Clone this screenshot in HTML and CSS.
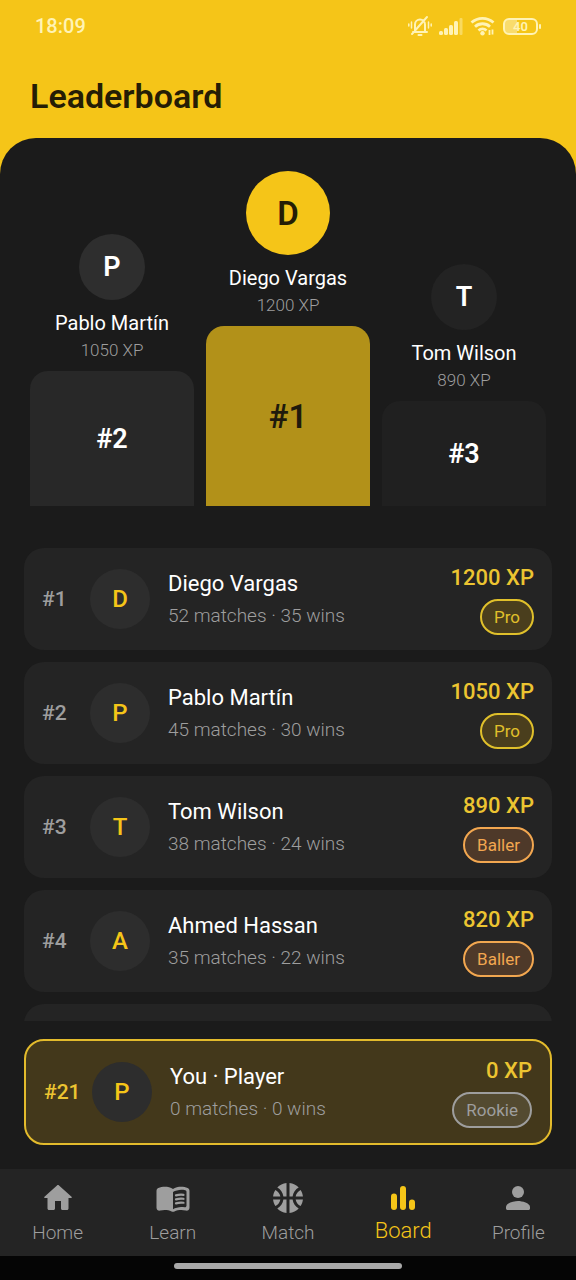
FILE: index.html
```html
<!DOCTYPE html>
<html lang="en">
<head>
<meta charset="utf-8">
<meta name="viewport" content="width=device-width, initial-scale=1">
<title>Leaderboard</title>
<link rel="stylesheet" href="styles.css">
</head>
<body>
<div class="app">
  <div class="status">
    <time class="status-time">18:09</time>
    <div class="status-icons">
      <svg width="24" height="22" viewBox="0 0 24 22" fill="none" stroke="currentColor" stroke-width="2" stroke-linecap="round" aria-label="Silent" role="img">
        <path d="M5 17h14M7 16V9.500a5 5 0 0 1 10 0V16M10.500 20h3M4 19 19 2"/>
        <path d="M3.500 7v6M.8 9v2M20.500 7v6M23.200 9v2" stroke-width="1.500"/>
      </svg>
      <svg width="24" height="18" viewBox="0 0 24 18" fill="currentColor" aria-label="Signal" role="img">
        <rect y="14" width="4" height="4" rx="1.500"/><rect x="5" y="11" width="4" height="7" rx="1.500"/><rect x="10" y="8" width="4" height="10" rx="1.500"/><rect x="15" y="4" width="4" height="14" rx="1.500"/><rect x="20.500" y="1" width="3" height="17" rx="1" opacity=".45"/>
      </svg>
      <svg width="26" height="20" viewBox="0 0 26 20" fill="none" stroke="currentColor" stroke-width="2.800" aria-label="Wi-Fi" role="img">
        <path d="M1.500 6.500a16.500 16.500 0 0 1 22 0M5 10.700a11 11 0 0 1 15 0M8.500 14.500a6 6 0 0 1 8 0"/>
        <circle cx="12.500" cy="17.200" r="2.200" fill="currentColor" stroke="none"/>
        <path d="M19.500 14v5M22.500 13.500v5" stroke-width="1.800"/>
      </svg>
      <span class="battery"><span class="battery-level">40</span></span>
    </div>
  </div>
  <header class="header"><h1 class="title">Leaderboard</h1></header>

  <main class="panel">
    <section class="podium" aria-label="Top three">
      <div class="place">
        <div class="medal medal-second">P</div>
        <div class="place-name">Pablo Martín</div>
        <div class="place-xp">1050 XP</div>
        <div class="block block-second">#2</div>
      </div>
      <div class="place">
        <div class="medal medal-first">D</div>
        <div class="place-name">Diego Vargas</div>
        <div class="place-xp">1200 XP</div>
        <div class="block block-first">#1</div>
      </div>
      <div class="place">
        <div class="medal medal-third">T</div>
        <div class="place-name">Tom Wilson</div>
        <div class="place-xp">890 XP</div>
        <div class="block block-third">#3</div>
      </div>
    </section>

    <ol class="ranking">
      <li class="row">
        <span class="rank">#1</span><span class="avatar">D</span>
        <div class="who"><div class="name">Diego Vargas</div><div class="record">52 matches · 35 wins</div></div>
        <div class="score"><div class="xp">1200 XP</div><span class="badge badge-pro">Pro</span></div>
      </li>
      <li class="row">
        <span class="rank">#2</span><span class="avatar">P</span>
        <div class="who"><div class="name">Pablo Martín</div><div class="record">45 matches · 30 wins</div></div>
        <div class="score"><div class="xp">1050 XP</div><span class="badge badge-pro">Pro</span></div>
      </li>
      <li class="row">
        <span class="rank">#3</span><span class="avatar">T</span>
        <div class="who"><div class="name">Tom Wilson</div><div class="record">38 matches · 24 wins</div></div>
        <div class="score"><div class="xp">890 XP</div><span class="badge badge-baller">Baller</span></div>
      </li>
      <li class="row">
        <span class="rank">#4</span><span class="avatar">A</span>
        <div class="who"><div class="name">Ahmed Hassan</div><div class="record">35 matches · 22 wins</div></div>
        <div class="score"><div class="xp">820 XP</div><span class="badge badge-baller">Baller</span></div>
      </li>
      <li class="row row-next" aria-hidden="true"></li>
    </ol>

    <section class="row row-me" aria-label="Your position">
      <span class="rank">#21</span><span class="avatar">P</span>
      <div class="who"><div class="name">You · Player</div><div class="record">0 matches · 0 wins</div></div>
      <div class="score"><div class="xp">0 XP</div><span class="badge badge-rookie">Rookie</span></div>
    </section>
  </main>

  <nav class="nav" aria-label="Main">
    <a class="tab" href="#home">
      <svg class="tab-icon" viewBox="0 0 24 24" aria-hidden="true"><path d="M10 19v-5h4v5c0 .55.45 1 1 1h3c.55 0 1-.45 1-1v-7h1.700c.46 0 .68-.57.33-.87L12.670 3.600c-.38-.34-.96-.34-1.340 0l-8.360 7.530c-.34.3-.13.87.33.87H5v7c0 .55.45 1 1 1h3c.55 0 1-.45 1-1z"/></svg>
      <span class="tab-label">Home</span>
    </a>
    <a class="tab" href="#learn">
      <svg class="tab-icon" viewBox="0 0 24 24" aria-hidden="true">
        <path fill-rule="evenodd" d="M17.500 4.500c-1.950 0-4.050.4-5.500 1.500-1.450-1.100-3.550-1.500-5.500-1.500-1.450 0-2.990.22-4.280.79C1.490 5.620 1 6.330 1 7.140v11.280c0 1.300 1.220 2.260 2.480 1.940.98-.25 2.020-.36 3.020-.36 1.560 0 3.220.26 4.560.92.6.3 1.280.3 1.870 0 1.340-.67 3-.92 4.560-.92 1 0 2.040.11 3.020.36 1.260.33 2.480-.63 2.480-1.940V7.140c0-.81-.49-1.520-1.220-1.850-1.280-.57-2.820-.79-4.270-.79zM21 17.230c0 .63-.58 1.090-1.200.98-.75-.14-1.530-.2-2.300-.2-1.700 0-4.150.65-5.500 1.500V8c1.350-.85 3.800-1.500 5.500-1.500.92 0 1.830.09 2.700.28.46.1.8.51.8.98v9.470z"/>
        <path d="M14 10.250q2.400-.75 5-.4M14 12.900q2.400-.75 5-.4M14 15.560q2.400-.75 5-.4" fill="none" stroke="currentColor" stroke-width="1.500" stroke-linecap="round"/>
      </svg>
      <span class="tab-label">Learn</span>
    </a>
    <a class="tab" href="#match">
      <svg class="tab-icon" viewBox="0 0 24 24" aria-hidden="true"><path d="M17.090 11h4.860c-.16-1.610-.71-3.110-1.540-4.400-1.730.83-2.990 2.450-3.320 4.400zM6.910 11c-.33-1.950-1.590-3.570-3.320-4.400-.83 1.290-1.380 2.790-1.540 4.400h4.860zM15.070 11c.32-2.590 1.880-4.790 4.060-6-1.600-1.630-3.740-2.710-6.130-2.950V11h2.070zM11 11V2.050C8.610 2.290 6.460 3.370 4.870 5c2.180 1.210 3.740 3.410 4.060 6H11zM8.930 13c-.32 2.590-1.880 4.790-4.060 6 1.600 1.630 3.740 2.710 6.130 2.950V13H8.930zM15.070 13H13v8.950c2.390-.24 4.540-1.320 6.130-2.950-2.180-1.210-3.740-3.410-4.060-6zM3.590 17.400c1.720-.83 2.990-2.460 3.320-4.400H2.050c.16 1.610.71 3.110 1.540 4.400zM17.090 13c.33 1.950 1.590 3.570 3.320 4.400.83-1.290 1.380-2.790 1.540-4.400h-4.860z"/></svg>
      <span class="tab-label">Match</span>
    </a>
    <a class="tab tab-active" href="#board" aria-current="page">
      <svg class="tab-icon" viewBox="0 0 24 24" aria-hidden="true"><rect x="4" y="9" width="4" height="11" rx="2"/><rect x="10" y="4" width="4" height="16" rx="2"/><rect x="16" y="13" width="4" height="7" rx="2"/></svg>
      <span class="tab-label">Board</span>
    </a>
    <a class="tab" href="#profile">
      <svg class="tab-icon" viewBox="0 0 24 24" aria-hidden="true"><circle cx="12" cy="8" r="4"/><path d="M12 14c-2.670 0-8 1.340-8 4v1c0 .55.45 1 1 1h14c.55 0 1-.45 1-1v-1c0-2.660-5.330-4-8-4z"/></svg>
      <span class="tab-label">Profile</span>
    </a>
  </nav>
  <div class="gesture"><div class="gesture-pill"></div></div>
</div>
</body>
</html>
```

FILE: styles.css
```css
:root {
  --yellow: #f5c518;
  --ink: #1b1b1b;
  --card: #242424;
  --circle: #2d2d2d;
  --grey: #9e9e9e;
}

* { box-sizing: border-box; }

body {
  margin: 0;
  background: var(--yellow);
  color: #fff;
  font-family: Roboto, "Liberation Sans", sans-serif;
}

.app {
  display: flex;
  flex-direction: column;
  height: 100vh;
}

.status {
  display: flex;
  justify-content: space-between;
  align-items: center;
  height: 54px;
  padding: 0 38px 2px 35px;
  color: #fff3b5;
}
.status-time { font-size: 20px; font-weight: 500; }
.status-icons { display: flex; align-items: center; gap: 7px; }
.battery {
  position: relative;
  width: 35px;
  height: 17px;
  border: 2px solid currentColor;
  border-radius: 6px;
  background: linear-gradient(to right, #f9dc6c 40%, transparent 40%);
  font-size: 13px;
  font-weight: 600;
  line-height: 13px;
  text-align: center;
}
.battery-level { display: block; }
.battery::after {
  content: "";
  position: absolute;
  top: 4px;
  right: -5px;
  width: 2px;
  height: 5px;
  border-radius: 1px;
  background: currentColor;
}

.header { height: 84px; padding: 22px 30px; }
.title {
  margin: 0;
  color: #251d05;
  font-size: 34px;
  font-weight: 600;
  line-height: 40px;
}

.panel {
  display: flex;
  flex: 1;
  flex-direction: column;
  min-height: 0;
  padding: 33px 24px 24px;
  border-radius: 36px 36px 0 0;
  background: var(--ink);
}

.podium {
  display: grid;
  grid-template-columns: repeat(3, 1fr);
  gap: 12px;
  align-items: end;
  padding: 0 6px;
}
.place { display: flex; flex-direction: column; align-items: center; }
.medal {
  display: grid;
  place-items: center;
  width: 66px;
  height: 66px;
  border-radius: 50%;
  font-size: 27px;
  font-weight: 600;
}
.medal-first {
  width: 84px;
  height: 84px;
  background: var(--yellow);
  color: #251d05;
  font-size: 33px;
}
.medal-second { background: #2e2e2e; }
.medal-third { background: #232323; }
.place-name { margin-top: 9px; font-size: 20px; line-height: 28px; }
.place-xp {
  margin-bottom: 7px;
  color: var(--grey);
  font-size: 17px;
  font-weight: 300;
  line-height: 27px;
}
.block {
  display: grid;
  place-items: center;
  width: 100%;
  border-radius: 18px 18px 0 0;
  font-size: 27px;
  font-weight: 600;
}
.block-first {
  height: 180px;
  background: #b29119;
  color: #1f1a0c;
  font-size: 33px;
}
.block-second { height: 135px; background: #282828; }
.block-third { height: 105px; background: #202020; }

.ranking {
  display: flex;
  flex: 1;
  flex-direction: column;
  gap: 12px;
  min-height: 0;
  margin: 42px 0 0;
  padding: 0;
  overflow: hidden;
  list-style: none;
}
.row {
  display: flex;
  flex-shrink: 0;
  align-items: center;
  padding: 15px 18px;
  border-radius: 20px;
  background: var(--card);
}
.row-next { min-height: 102px; }
.rank {
  width: 48px;
  color: var(--grey);
  font-size: 21px;
  font-weight: 500;
}
.avatar {
  display: grid;
  place-items: center;
  width: 60px;
  height: 60px;
  border-radius: 50%;
  background: var(--circle);
  color: var(--yellow);
  font-size: 24px;
  font-weight: 500;
}
.who { flex: 1; padding: 2px 0 0 18px; line-height: 32px; }
.name { font-size: 22px; }
.record { color: var(--grey); font-size: 19px; font-weight: 300; }
.score {
  display: flex;
  flex-direction: column;
  align-items: flex-end;
  gap: 8px;
  padding-top: 2px;
}
.xp {
  color: #ecc431;
  font-size: 22px;
  font-weight: 500;
  line-height: 26px;
}
.badge {
  height: 36px;
  padding: 0 12px;
  border: 2px solid;
  border-radius: 18px;
  font-size: 17px;
  line-height: 33px;
}
.badge-pro { border-color: #e0c02b; background: #4a3e1d; color: #e0c02b; }
.badge-baller { border-color: #f2a750; background: #4e3929; color: #f2a750; }
.badge-rookie { border-color: var(--grey); background: #534a30; color: var(--grey); }

.row-me {
  margin-top: 18px;
  border: 2px solid #e3bb2c;
  background: #43381b;
}
.row-me .rank { color: #ecc431; }

.nav {
  display: grid;
  grid-template-columns: repeat(5, 1fr);
  height: 87px;
  background: var(--card);
}
.tab {
  display: flex;
  flex-direction: column;
  align-items: center;
  gap: 4px;
  padding-top: 11px;
  color: var(--grey);
  text-decoration: none;
}
.tab-icon { width: 36px; height: 36px; fill: currentColor; }
.tab-label { font-size: 19px; font-weight: 300; line-height: 26px; }
.tab-active { color: var(--yellow); }
.tab-active .tab-label { font-size: 22px; line-height: 22px; }

.gesture {
  display: flex;
  justify-content: center;
  height: 24px;
  padding-top: 7px;
  background: #050505;
}
.gesture-pill { width: 228px; height: 6px; border-radius: 3px; background: #a9a9a9; }
```
